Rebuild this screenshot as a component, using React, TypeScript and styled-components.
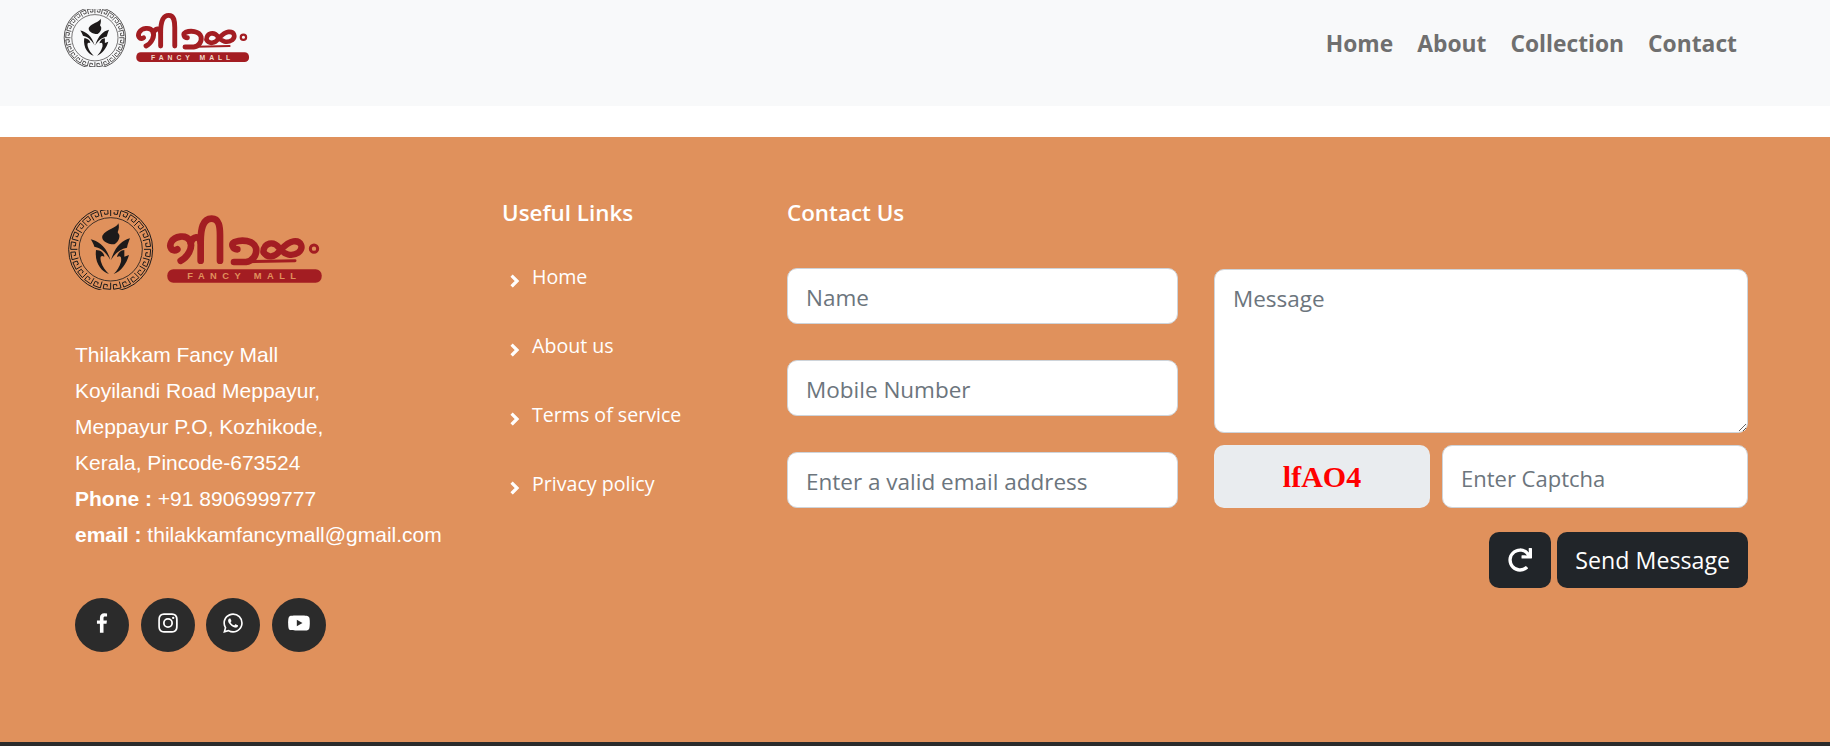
import React from 'react'
import styled, { createGlobalStyle } from 'styled-components'
import { BiChevronRight, BiLogoFacebook, BiLogoInstagram, BiLogoWhatsapp, BiLogoYoutube } from 'react-icons/bi'
import { FaRedo } from 'react-icons/fa'

const UI_FONT = `"Open Sans", "Noto Sans", sans-serif`

const GlobalStyle = createGlobalStyle`
    html, body {
        margin: 0;
        padding: 0;
        background: #fff;
    }
    * {
        box-sizing: border-box;
    }
`

// greek key ring of the emblem, one hook per unit, bent around the circle
const buildMeander = (cx: number, cy: number, inner: number, outer: number, count: number) => {
    const unit = [[0, 0], [0, 1], [0.72, 1], [0.72, 0.32], [0.36, 0.32], [0.36, 0.62]]
    let d = ''
    for (let i = 0; i < count; i++) {
        unit.forEach(([u, v], n) => {
            const angle = ((i + u) / count) * Math.PI * 2
            const r = inner + v * (outer - inner)
            const x = (cx + Math.cos(angle) * r).toFixed(1)
            const y = (cy + Math.sin(angle) * r).toFixed(1)
            d += `${n === 0 ? 'M' : 'L'}${x} ${y} `
        })
    }
    return d
}

const MEANDER = buildMeander(182, 178, 100, 120, 24)

interface LogoProps {
    width: number
    letters: string
}

const Logo: React.FC<LogoProps> = ({ width, letters }) => (
    <svg width={width} height={width * 240 / 768} viewBox="51 60 768 240" style={{ display: 'block' }}>
        <g fill="none" stroke="#1d1a1a">
            <circle cx="182" cy="178" r="126" strokeWidth="3" />
            <circle cx="182" cy="178" r="95" strokeWidth="2.5" />
            <path d={MEANDER} strokeWidth="3" />
        </g>
        <g fill="#1d1a1a" transform="translate(45 45)">
            <path d="M160 55 C155 70 125 72 112 92 C108 105 125 118 148 118 C158 112 165 100 163 90 L158 82 C162 72 163 62 160 55 Z" />
            <path d="M77 103 C100 108 125 125 136 165 C122 140 105 128 88 125 C86 118 82 110 77 103 Z" />
            <path d="M93 135 C108 135 118 145 118 155 C108 150 104 155 108 170 C112 185 122 197 132 207 C110 200 88 175 93 135 Z" />
            <path d="M195 100 C172 105 150 125 138 165 C150 145 165 132 186 128 C188 118 192 108 195 100 Z" />
            <path d="M178 135 C165 135 157 148 156 156 C166 150 170 155 168 170 C164 185 156 197 146 207 C168 200 185 175 192 150 L178 155 Z" />
        </g>
        <g fill="none" stroke="#a31d22" strokeWidth="20" strokeLinecap="round" strokeLinejoin="round" transform="translate(330 66)">
            <path d="M52 112 C36 122 26 105 34 90 C44 72 78 66 90 86 C100 106 84 135 62 146" />
            <path d="M92 92 C100 72 118 70 122 90 L122 146" />
            <path d="M122 90 C122 50 128 20 155 20 C178 20 180 45 180 70 L180 146" />
            <path d="M232 112 C218 112 212 96 224 90 C245 82 280 84 288 108 C292 128 278 148 258 150 L222 150" />
            <path d="M310 120 C312 92 340 85 358 108 C372 128 395 135 415 122 C432 108 425 85 400 88 C382 90 370 105 358 118 C345 135 322 140 310 120 Z" strokeWidth="19" />
            <path d="M222 150 L405 146" strokeWidth="9" />
            <circle cx="462" cy="110" r="11" strokeWidth="9" />
        </g>
        <rect x="352" y="238" width="463" height="40" rx="18" fill="#a31d22" />
        <text x="412" y="268" textLength="326" fontFamily="Liberation Sans, sans-serif" fontWeight="700" fontSize="28" fill={letters}>
            FANCY MALL
        </text>
    </svg>
)

const NAV_ITEMS = ['Home', 'About', 'Collection', 'Contact']
const ADDRESS = ['Thilakkam Fancy Mall', 'Koyilandi Road Meppayur,', 'Meppayur P.O, Kozhikode,', 'Kerala, Pincode-673524']
const LINKS = ['Home', 'About us', 'Terms of service', 'Privacy policy']

const App: React.FC = () => {
    return (
        <>
            <GlobalStyle />
            <StyledHeader>
                <Logo width={187} letters="#f1d9c9" />
                <StyledNav>
                    {NAV_ITEMS.map((item) => (
                        <StyledNavLink key={item}>{item}</StyledNavLink>
                    ))}
                </StyledNav>
            </StyledHeader>
            <StyledFooter>
                <StyledBrand>
                    <StyledFooterLogo>
                        <Logo width={256} letters="#e0915c" />
                    </StyledFooterLogo>
                    <StyledAddress>
                        {ADDRESS.map((line) => (
                            <div key={line}>{line}</div>
                        ))}
                        <div><strong>Phone :</strong> +91 8906999777</div>
                        <div><strong>email :</strong> thilakkamfancymall@gmail.com</div>
                    </StyledAddress>
                    <StyledSocial>
                        <StyledSocialLink><BiLogoFacebook /></StyledSocialLink>
                        <StyledSocialLink><BiLogoInstagram /></StyledSocialLink>
                        <StyledSocialLink><BiLogoWhatsapp /></StyledSocialLink>
                        <StyledSocialLink><BiLogoYoutube /></StyledSocialLink>
                    </StyledSocial>
                </StyledBrand>
                <div>
                    <StyledHeading>Useful Links</StyledHeading>
                    <StyledLinkList>
                        {LINKS.map((link) => (
                            <StyledLinkRow key={link}>
                                <BiChevronRight />
                                {link}
                            </StyledLinkRow>
                        ))}
                    </StyledLinkList>
                </div>
                <div>
                    <StyledHeading>Contact Us</StyledHeading>
                    <StyledForm>
                        <StyledInputColumn>
                            <StyledInput placeholder="Name" />
                            <StyledInput placeholder="Mobile Number" />
                            <StyledInput placeholder="Enter a valid email address" />
                        </StyledInputColumn>
                        <StyledMessageColumn>
                            <StyledTextarea placeholder="Message" />
                            <StyledCaptchaRow>
                                <StyledCaptcha>lfAO4</StyledCaptcha>
                                <StyledInput placeholder="Enter Captcha" />
                            </StyledCaptchaRow>
                        </StyledMessageColumn>
                        <StyledActions>
                            <StyledButton type="button" aria-label="Refresh captcha"><FaRedo /></StyledButton>
                            <StyledButton type="button">Send Message</StyledButton>
                        </StyledActions>
                    </StyledForm>
                </div>
            </StyledFooter>
            <StyledBottomBar />
        </>
    )
}

const StyledHeader = styled.header`
    height: 106px;
    margin-bottom: 31px;
    padding: 9px 93px 0 63px;
    background: #f8f9fa;

    display: flex;
    justify-content: space-between;
    align-items: flex-start;
`

const StyledNav = styled.nav`
    margin-top: 20px;
    display: flex;
    gap: 24px;
`

const StyledNavLink = styled.a`
    font-family: ${UI_FONT};
    font-size: 22.8px;
    font-weight: 700;
    line-height: 30px;
    color: #6f6f6f;
`

const StyledFooter = styled.footer`
    padding: 61px 82px 90px 75px;
    background: #e0915c;
    color: #fff;

    display: grid;
    grid-template-columns: 427px 285px 1fr;
`

const StyledBrand = styled.div`
    display: flex;
    flex-direction: column;
`

const StyledFooterLogo = styled.div`
    margin: 12px 0 47px -8px;
`

const StyledAddress = styled.div`
    font-family: "Liberation Sans", Arial, sans-serif;
    font-size: 21px;
    line-height: 36px;
    white-space: nowrap;
`

const StyledSocial = styled.div`
    margin-top: 45px;
    display: flex;
    gap: 11.5px;
`

const StyledSocialLink = styled.a`
    width: 54px;
    height: 54px;
    border-radius: 50%;
    background: #2b2b2b;
    color: #fff;
    font-size: 26px;

    display: flex;
    justify-content: center;
    align-items: center;
    padding-bottom: 4px;
`

const StyledHeading = styled.h4`
    margin: 0;
    font-family: ${UI_FONT};
    font-size: 22.4px;
    font-weight: 600;
    line-height: 30px;
`

const StyledLinkList = styled.div`
    margin-top: 36px;
    display: flex;
    flex-direction: column;
    gap: 43px;
`

const StyledLinkRow = styled.a`
    height: 26px;
    font-family: ${UI_FONT};
    font-size: 19.6px;
    line-height: 26px;
    white-space: nowrap;

    display: flex;
    align-items: center;

    svg {
        width: 24px;
        height: 24px;
        margin: 8px 6px 0 0;
        stroke: currentColor;
        stroke-width: 1.2;
    }
`

const StyledForm = styled.form`
    margin-top: 40px;
    display: grid;
    grid-template-columns: 391px 1fr;
    column-gap: 36px;
`

const StyledInputColumn = styled.div`
    display: flex;
    flex-direction: column;
    gap: 36px;
`

const StyledMessageColumn = styled.div`
    padding-top: 1px;
    display: flex;
    flex-direction: column;
    gap: 12px;
`

const StyledInput = styled.input`
    width: 100%;
    height: 56px;
    padding: 2px 18px 0;
    border: 1px solid #ced4da;
    border-radius: 10px;
    background: #fff;
    font-family: ${UI_FONT};
    font-size: 22.5px;
    color: #212529;

    &::placeholder {
        color: #6c757d;
        opacity: 1;
    }
`

const StyledTextarea = styled.textarea`
    display: block;
    width: 100%;
    height: 164px;
    padding: 14px 18px;
    border: 1px solid #ced4da;
    border-radius: 10px;
    background: #fff;
    font-family: ${UI_FONT};
    font-size: 22.5px;
    line-height: 30px;

    &::placeholder {
        color: #6c757d;
        opacity: 1;
    }
`

const StyledCaptchaRow = styled.div`
    display: grid;
    grid-template-columns: 216px 1fr;
    gap: 12px;

    input {
        height: 63px;
        font-size: 22px;
    }
`

const StyledCaptcha = styled.div`
    height: 63px;
    border-radius: 10px;
    background: #e9ecef;
    font-family: "Liberation Serif", "Times New Roman", serif;
    font-size: 30px;
    font-weight: 700;
    color: #ff0000;

    display: flex;
    justify-content: center;
    align-items: center;
`

const StyledActions = styled.div`
    grid-column: 1 / -1;
    margin-top: 24px;
    display: flex;
    justify-content: flex-end;
    gap: 6px;
`

const StyledButton = styled.button`
    height: 56px;
    min-width: 62px;
    padding: 0 18px;
    border: 0;
    border-radius: 10px;
    background: #212529;
    color: #fff;
    font-family: ${UI_FONT};
    font-size: 23.2px;

    display: flex;
    justify-content: center;
    align-items: center;

    svg {
        font-size: 24px;
        flex: none;
    }
`

const StyledBottomBar = styled.div`
    height: 4px;
    background: #2b2b2b;
`

export default App
